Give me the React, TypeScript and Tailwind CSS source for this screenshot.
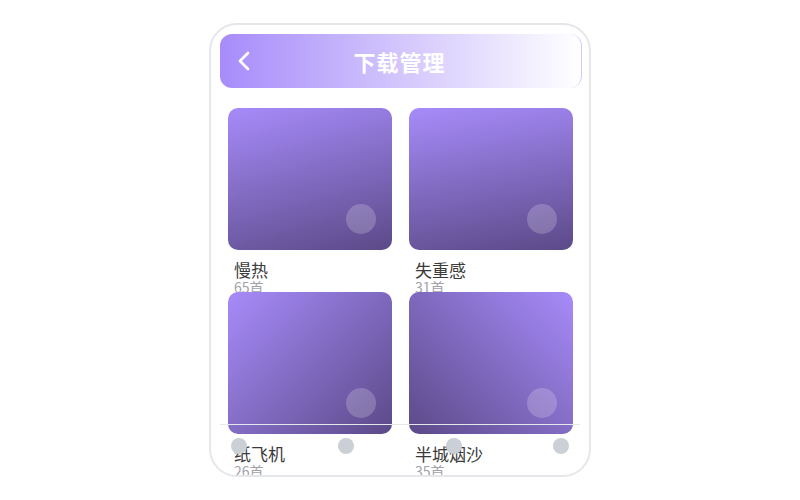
const albums = [
  { name: '慢热', count: 65, bg: 'bg-[linear-gradient(165deg,#a78bfa_0%,#5b4a88_100%)]' },
  { name: '失重感', count: 31, bg: 'bg-[linear-gradient(170deg,#a78bfa_0%,#5b4a88_100%)]' },
  { name: '纸飞机', count: 26, bg: 'bg-[linear-gradient(135deg,#a78bfa_0%,#5b4a88_100%)]' },
  { name: '半城烟沙', count: 35, bg: 'bg-[linear-gradient(225deg,#a78bfa_0%,#5b4a88_100%)]' },
]

function AlbumCard({ name, count, bg }: { name: string; count: number; bg: string }) {
  return (
    <div className="flex flex-col">
      {/* cover */}
      <div className={`relative h-[142px] rounded-[10px] ${bg}`}>
        <div className="absolute right-[16px] bottom-[16px] w-[30px] h-[30px] rounded-full bg-white/20" />
      </div>
      <div className="h-[42px] pt-[10px] px-[6px]">
        <div className="text-[17px] leading-[19px] text-[#3a3a3a]">{name}</div>
        <div className="text-[14px] leading-[16px] text-[#a1a1aa]">{count}首</div>
      </div>
    </div>
  )
}

export default function App() {
  return (
    <div
      className="w-full h-screen flex items-center justify-center bg-white"
      style={{ fontFamily: '"Noto Sans CJK SC", "Noto Sans", sans-serif' }}
    >
      <div className="relative w-[382px] h-[454px] border-2 border-[#e5e7eb] rounded-[28px] overflow-hidden bg-white">
        {/* Header */}
        <div className="pt-[9px] pl-[9px] pr-[7px]">
          <div className="relative h-[54px] rounded-xl border-r border-[#d4c8fd] bg-gradient-to-r from-[#a78bfa] via-[#d3c6fc] to-white flex items-center justify-center">
            <svg
              width="14"
              height="22"
              viewBox="0 0 14 22"
              fill="none"
              stroke="white"
              strokeWidth="2.6"
              strokeLinecap="round"
              strokeLinejoin="round"
              className="absolute left-[17px] top-[16px]"
            >
              <path d="M11 3 L3 11 L11 19" />
            </svg>
            <span className="text-[22px] font-bold text-white tracking-[1px] -ml-[2px]">下载管理</span>
          </div>
        </div>

        {/* Album grid */}
        <div className="grid grid-cols-2 gap-x-[17px] pt-[20px] pl-[17px] pr-[16px]">
          {albums.map((a) => (
            <AlbumCard key={a.name} {...a} />
          ))}
        </div>

        {/* Bottom nav */}
        <div className="absolute left-[9px] right-[9px] bottom-0 h-[51px] border-t border-[#e5e7eb] pt-[13px] px-[11px] flex justify-between items-start">
          <div className="w-4 h-4 rounded-full bg-[#cbd0d6]" />
          <div className="w-4 h-4 rounded-full bg-[#cbd0d6]" />
          <div className="w-4 h-4 rounded-full bg-[#cbd0d6]" />
          <div className="w-4 h-4 rounded-full bg-[#cbd0d6]" />
        </div>
      </div>
    </div>
  )
}
